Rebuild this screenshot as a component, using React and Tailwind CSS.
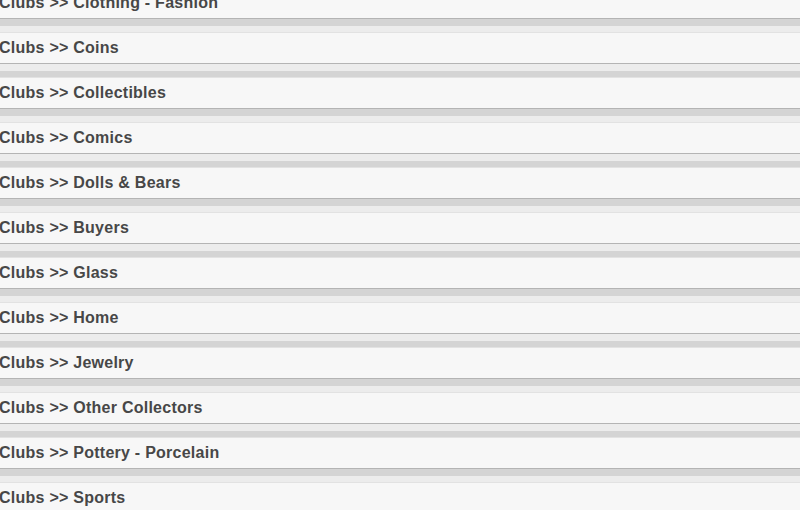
import React from 'react';

// ## Lista de categorias de clubes
const categories = [
  'Clothing - Fashion',
  'Coins',
  'Collectibles',
  'Comics',
  'Dolls & Bears',
  'Buyers',
  'Glass',
  'Home',
  'Jewelry',
  'Other Collectors',
  'Pottery - Porcelain',
  'Sports'
];

export default function App() {
  return (
    <div className="h-[510px] w-[800px] overflow-hidden bg-[#f7f7f7]">
      <ul className="-mt-[13px]">
        {categories.map((name, i) => (
          <li key={name}>
            <a
              href="#"
              className="flex h-[32px] items-center border-t border-b border-t-[#e2e2e2] border-b-[#b4b4b4] bg-[#f7f7f7] text-[16px] font-bold tracking-[0.25px] text-[#474747] [font-family:'Liberation_Sans',Arial,sans-serif]"
            >
              <span className="-ml-[1px]">Clubs &gt;&gt; {name}</span>
            </a>
            {i % 2 === 0 ? (
              <div>
                <div className="h-[7px] bg-[#d4d4d4]" />
                <div className="h-[6px] bg-[#ececec]" />
              </div>
            ) : (
              <div>
                <div className="h-[7px] bg-[#ececec]" />
                <div className="h-[6px] bg-[#d4d4d4]" />
              </div>
            )}
          </li>
        ))}
      </ul>
    </div>
  );
}
